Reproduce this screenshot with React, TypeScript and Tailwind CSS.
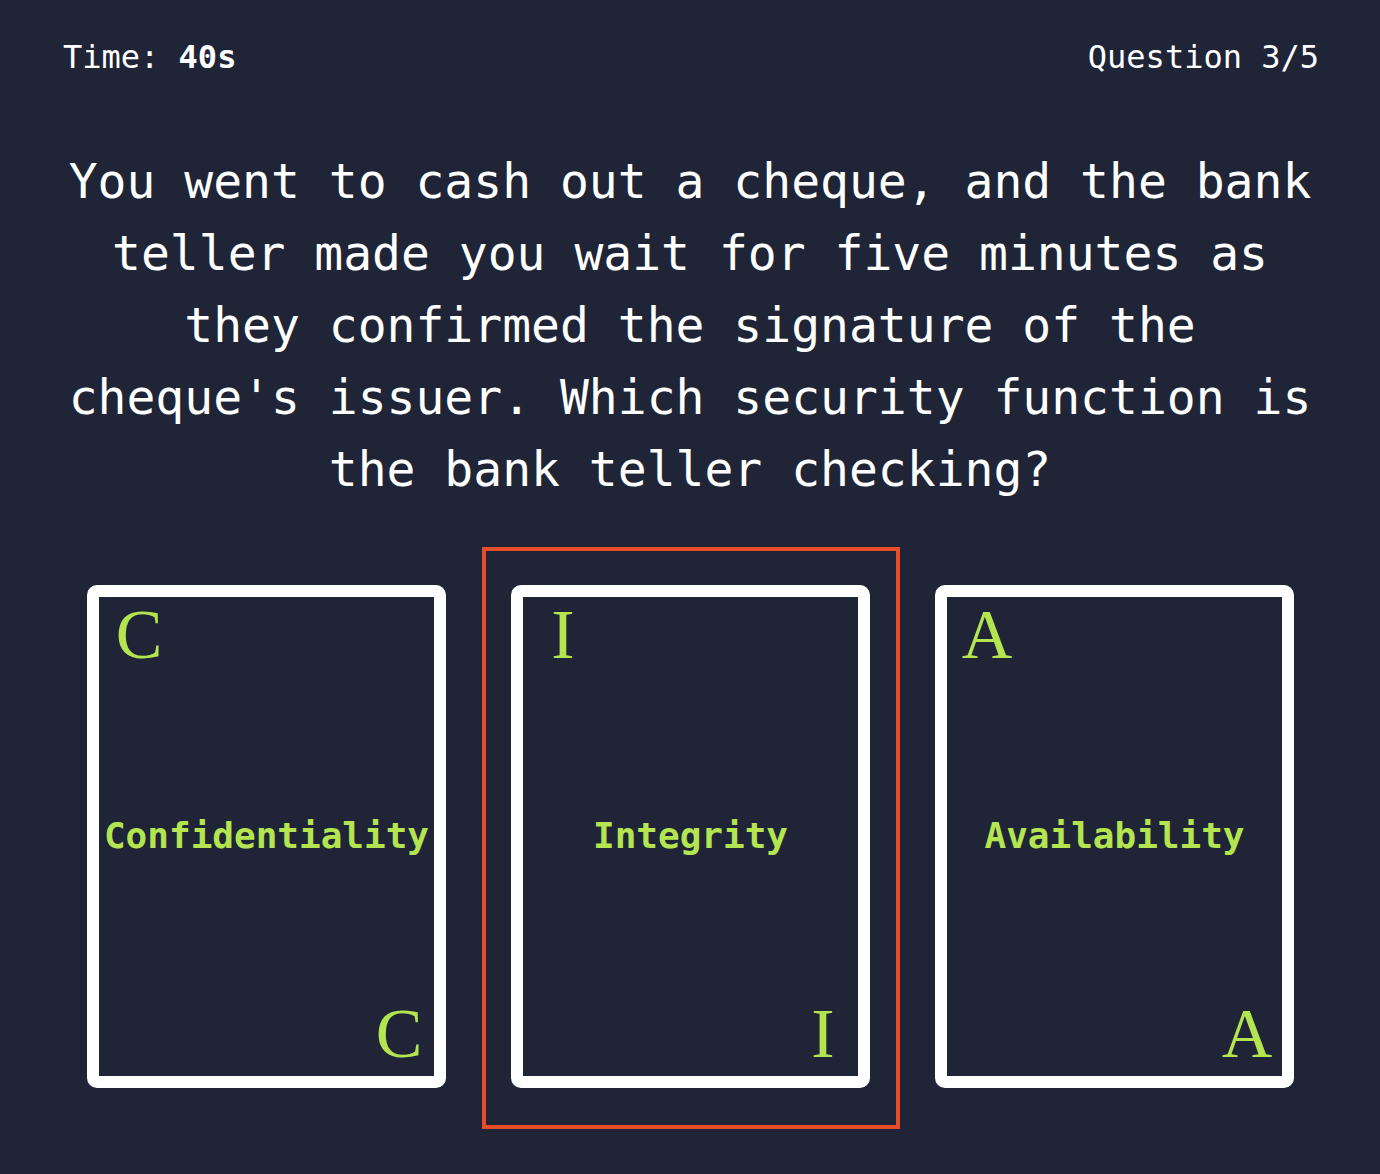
import React from 'react';

interface CardProps {
    letter: string;
    label: string;
    selected?: boolean;
}

const mono = { fontFamily: '"DejaVu Sans Mono", "Liberation Mono", monospace' };
const serif = { fontFamily: '"Liberation Serif", "DejaVu Serif", serif' };

const Card: React.FC<CardProps> = ({ letter, label, selected }) => {
    return (
        <div
            className={`w-[418px] border-4 pl-[25px] pr-[26px] pt-[34px] pb-[37px] ${selected ? 'border-[#e94e2c]' : 'border-transparent'}`}
        >
            <div className="w-[359px] h-[503px] border-[12px] border-white rounded-[10px] bg-[#1f2437] flex flex-col">
                <div className="w-20 mt-[3px] text-center text-[70px] leading-none text-[#b4e450]" style={serif}>
                    {letter}
                </div>
                <div className="flex-1 flex items-center justify-center pt-[3px]">
                    <span className="text-[36px] leading-normal font-bold text-[#b4e450]" style={mono}>
                        {label}
                    </span>
                </div>
                <div className="w-[70px] self-end mb-[7px] text-center text-[70px] leading-none text-[#b4e450]" style={serif}>
                    {letter}
                </div>
            </div>
        </div>
    );
};

export default function App() {
    return (
        <div className="min-h-[1174px] w-full bg-[#1f2437] text-white pt-[33px] px-[60px]" style={mono}>
            <header className="flex justify-between items-center text-[32px] leading-normal pl-[3px] pr-[1px]">
                <div>
                    Time: <span className="font-bold">40s</span>
                </div>
                <div>Question 3/5</div>
            </header>

            <p className="mt-[64px] text-center text-[48px] leading-[72px]">
                You went to cash out a cheque, and the bank teller made you wait for five minutes as they
                confirmed the signature of the cheque's issuer. Which security function is the bank teller
                checking?
            </p>

            <div className="mt-[42px] -mx-[60px] pl-[2px] flex justify-center gap-[6px]">
                <Card letter="C" label="Confidentiality" />
                <Card letter="I" label="Integrity" selected />
                <Card letter="A" label="Availability" />
            </div>
        </div>
    );
}
